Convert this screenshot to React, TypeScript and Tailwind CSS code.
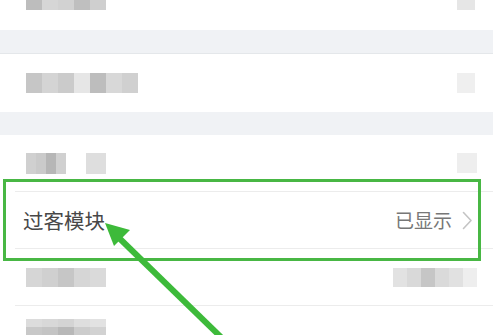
const font = {
  fontFamily: '"Noto Sans CJK SC", "Noto Sans", sans-serif',
};

// pixelated (mosaic) block standing in for blurred text
function Mosaic({ cells, h, w }: { cells: string[]; h: string; w: string }) {
  return (
    <div className={`flex blur-[0.7px] ${h}`}>
      {cells.map((c, i) => (
        <div key={i} className={`${w} h-full`} style={{ backgroundColor: c }} />
      ))}
    </div>
  );
}

function Divider() {
  return <div className="ml-[15px] h-px bg-[#ececec]" />;
}

export default function App() {
  return (
    <div
      className="relative h-[335px] w-[493px] overflow-hidden bg-white"
      style={font}
    >
      {/* row 0 (cut off at top) */}
      <div className="flex h-[30px] items-start justify-between pl-[26px] pr-[18px]">
        <Mosaic
          h="h-[10px]"
          w="w-[16px]"
          cells={["#bdbdbd", "#d6d6d6", "#d2d2d2", "#bfbfbf", "#cfcfcf"]}
        />
        <Mosaic h="h-[10px]" w="w-[18px]" cells={["#e6e6e6"]} />
      </div>
      <div className="h-[24px] border-b border-[#e4e7ea] bg-[#f0f2f5]" />

      {/* row 1 */}
      <div className="flex h-[58px] items-center justify-between pl-[26px] pr-[18px]">
        <Mosaic
          h="h-[20px]"
          w="w-[16px]"
          cells={["#c6c6c6", "#d4d4d4", "#cbcbcb", "#e6e6e6", "#bdbdbd", "#d8d8d8", "#d0d0d0"]}
        />
        <Mosaic h="h-[20px]" w="w-[18px]" cells={["#efefef"]} />
      </div>
      <div className="h-[23px] bg-[#f0f2f5]" />

      {/* row 2 */}
      <div className="flex h-[56px] items-center justify-between pl-[26px] pr-[16px]">
        <div className="flex items-center gap-[20px]">
          <Mosaic
            h="h-[21px]"
            w="w-[10px]"
            cells={["#d0d0d0", "#cacaca", "#b6b6b6", "#d0d0d0"]}
          />
          <Mosaic h="h-[21px]" w="w-[20px]" cells={["#dedede"]} />
        </div>
        <Mosaic h="h-[20px]" w="w-[20px]" cells={["#eeeeee"]} />
      </div>
      <Divider />

      {/* highlighted row */}
      <div className="flex h-[56px] items-center justify-between pl-[23px] pr-[20px]">
        <span className="text-[20.5px] text-[#474747]">过客模块</span>
        <div className="flex items-center gap-[10px]">
          <span className="text-[19px] text-[#777777]">已显示</span>
          <svg width="11" height="19" viewBox="0 0 11 19" fill="none">
            <path
              d="M1.5 1.5 L9 9.5 L1.5 17.5"
              stroke="#c4c4c4"
              strokeWidth="1.6"
              strokeLinecap="round"
              strokeLinejoin="round"
            />
          </svg>
        </div>
      </div>
      <Divider />

      {/* row 4 */}
      <div className="flex h-[56px] items-center justify-between pl-[26px] pr-[16px]">
        <Mosaic
          h="h-[19px]"
          w="w-[16px]"
          cells={["#d6d6d6", "#d0d0d0", "#c6c6c6", "#d6d6d6", "#dadada"]}
        />
        <Mosaic
          h="h-[19px]"
          w="w-[14px]"
          cells={["#e2e2e2", "#d9d9d9", "#c6c6c6", "#dadada", "#e1e1e1", "#eeeeee"]}
        />
      </div>
      <Divider />

      {/* row 5 (cut off at bottom) */}
      <div className="flex flex-col pl-[26px] pt-[13px]">
        <Mosaic
          h="h-[8px]"
          w="w-[16px]"
          cells={["#dcdcdc", "#d8d8d8", "#d4d4d4", "#dedede", "#e2e2e2"]}
        />
        <Mosaic
          h="h-[12px]"
          w="w-[16px]"
          cells={["#c8c8c8", "#c4c4c4", "#b8b8b8", "#cccccc", "#d2d2d2"]}
        />
      </div>

      {/* annotation: green box */}
      <div className="absolute left-[3px] top-[179px] h-[82px] w-[478px] border-[3px] border-[#48b744]" />

      {/* annotation: arrow */}
      <svg
        className="absolute left-0 top-0"
        width="493"
        height="335"
        viewBox="0 0 493 335"
      >
        <line
          x1="116"
          y1="235"
          x2="226"
          y2="342"
          stroke="#3dba3a"
          strokeWidth="6"
        />
        <polygon points="105,223 114,246 130,230" fill="#3dba3a" />
      </svg>
    </div>
  );
}
